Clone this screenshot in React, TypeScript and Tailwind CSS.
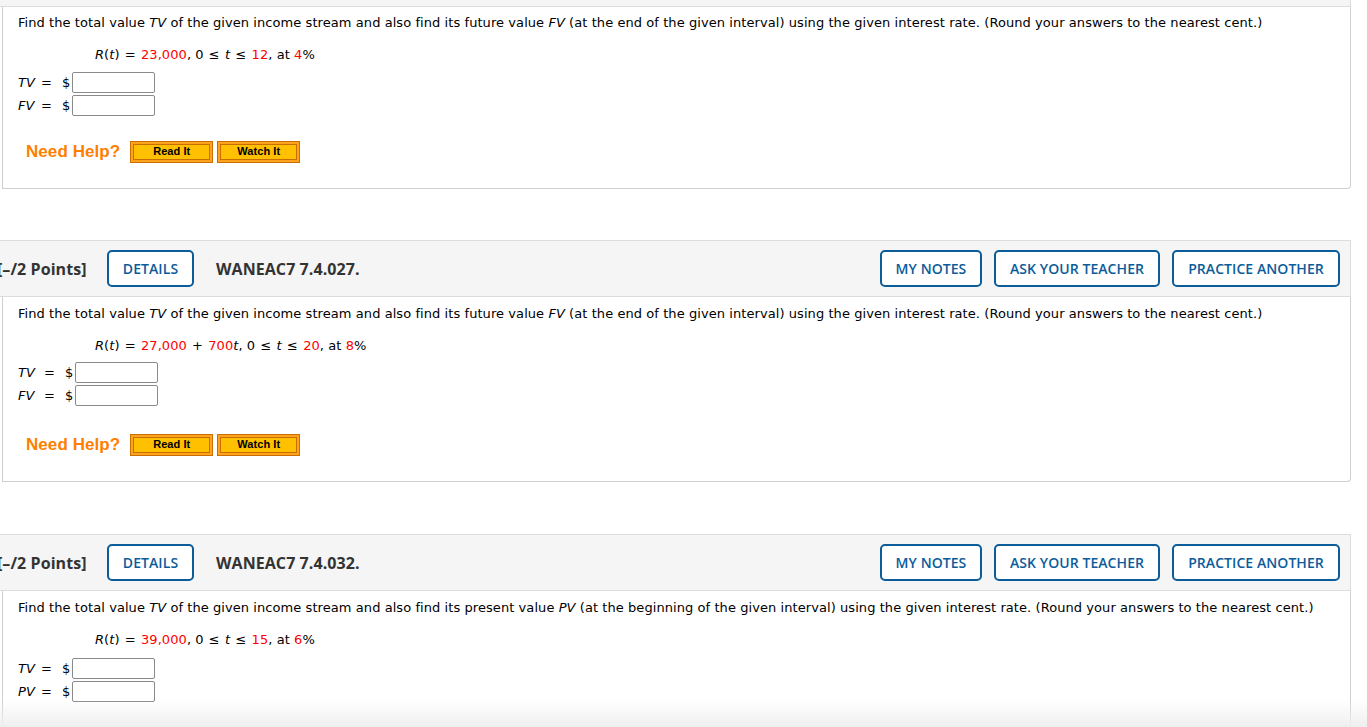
import React from "react";

const verdana = { fontFamily: '"DejaVu Sans", Verdana, sans-serif' };

function Header({ code }: { code: string }) {
  return (
    <div className="h-[57px] bg-[#f5f5f5] border-t border-b border-r border-[#dcdcdc] flex items-center pr-[10px]" style={{ fontFamily: '"Open Sans", "Noto Sans", sans-serif' }}>
      <span className="ml-[-3px] text-[16px] font-bold text-[#333333] w-[89px] whitespace-nowrap">[–/2 Points]</span>
      <button className="ml-[21px] h-[37px] w-[87px] rounded-[5px] border-2 border-[#0b5c99] text-[14px] font-semibold text-[#0b5c99] bg-white">DETAILS</button>
      <span className="ml-[22px] text-[16px] font-bold text-[#333333]">{code}</span>
      <div className="ml-auto flex gap-[12px]">
        <button className="h-[37px] w-[102px] rounded-[5px] border-2 border-[#0b5c99] text-[14px] font-semibold text-[#0b5c99] bg-white">MY NOTES</button>
        <button className="h-[37px] w-[166px] rounded-[5px] border-2 border-[#0b5c99] text-[14px] font-semibold text-[#0b5c99] bg-white">ASK YOUR TEACHER</button>
        <button className="h-[37px] w-[168px] rounded-[5px] border-2 border-[#0b5c99] text-[14px] font-semibold text-[#0b5c99] bg-white">PRACTICE ANOTHER</button>
      </div>
    </div>
  );
}

function HelpBtn({ label }: { label: string }) {
  return (
    <div className="h-[22px] w-[83px] border border-[#c86f00] bg-[#ffa21e] p-[2px]">
      <div className="h-full w-full border border-[#c86f00] bg-[#ffc000] flex items-center justify-center text-[11px] font-bold text-black leading-none" style={{ fontFamily: '"Liberation Sans", Arial, sans-serif' }}>
        {label}
      </div>
    </div>
  );
}

function NeedHelp() {
  return (
    <div className="flex items-center ml-[8px]">
      <span className="text-[17px] font-bold text-[#ff8000] mr-[10px]" style={{ fontFamily: '"Liberation Sans", Arial, sans-serif' }}>Need Help?</span>
      <HelpBtn label="Read It" />
      <div className="w-[4px]" />
      <HelpBtn label="Watch It" />
    </div>
  );
}

function Red({ children }: { children: React.ReactNode }) {
  return <span className="text-[#ff0000]">{children}</span>;
}

function Op({ children }: { children: React.ReactNode }) {
  return <span className="mx-[1px]">{children}</span>;
}

function AnswerRow({ label }: { label: string }) {
  return (
    <div className="flex items-center h-[23px]">
      <span className="italic w-[23px]">{label}</span>
      <span className="w-[21px]">=</span>
      <span className="w-[10px]">$</span>
      <div className="w-[83px] h-[21px] border border-[#8a8a8a] rounded-[2px] bg-white" />
    </div>
  );
}

const desc1 = "Find the total value ";

export default function App() {
  return (
    <div className="w-[1367px] h-[727px] overflow-hidden relative bg-white text-[13px] text-black tracking-[0.07px]" style={verdana}>
      {/* top partial header */}
      <div className="h-[7px] w-[1351px] bg-[#f5f5f5] border-b border-r border-[#dcdcdc]" />
      {/* card 1 body */}
      <div className="ml-[2px] w-[1349px] h-[182px] border-l border-r border-b border-[#cfcfcf] rounded-br-[4px] pl-[15px] pt-[7px]">
        <p className="leading-[18px]">
          {desc1}<i>TV</i> of the given income stream and also find its future value <i>FV</i> (at the end of the given interval) using the given interest rate. (Round your answers to the nearest cent.)
        </p>
        <p className="ml-[77px] mt-[14px] leading-[18px]">
          <i>R</i>(<i>t</i>) <Op>=</Op> <Red>23,000</Red>, 0 <Op>≤</Op> <i>t</i> <Op>≤</Op> <Red>12</Red>, at <Red>4</Red>%
        </p>
        <div className="mt-[7px]">
          <AnswerRow label="TV" />
          <AnswerRow label="FV" />
        </div>
        <div className="mt-[22px]">
          <NeedHelp />
        </div>
      </div>

      <div className="h-[51px]" />

      {/* card 2 */}
      <div className="w-[1351px]">
        <Header code="WANEAC7 7.4.027." />
        <div className="ml-[2px] w-[1349px] h-[185px] border-l border-r border-b border-[#cfcfcf] rounded-br-[4px] pl-[15px] pt-[8px]">
          <p className="leading-[18px]">
            {desc1}<i>TV</i> of the given income stream and also find its future value <i>FV</i> (at the end of the given interval) using the given interest rate. (Round your answers to the nearest cent.)
          </p>
          <p className="ml-[77px] mt-[14px] leading-[18px]">
            <i>R</i>(<i>t</i>) <Op>=</Op> <Red>27,000</Red> <Op>+</Op> <Red>700</Red><i>t</i>, 0 <Op>≤</Op> <i>t</i> <Op>≤</Op> <Red>20</Red>, at <Red>8</Red>%
          </p>
          <div className="mt-[6px] flex">
            <div>
              <div className="flex items-center h-[23px]">
                <span className="italic w-[26px]">TV</span>
                <span className="w-[21px]">=</span>
                <span className="w-[10px]">$</span>
                <div className="w-[83px] h-[21px] border border-[#8a8a8a] rounded-[2px] bg-white" />
              </div>
              <div className="flex items-center h-[23px]">
                <span className="italic w-[26px]">FV</span>
                <span className="w-[21px]">=</span>
                <span className="w-[10px]">$</span>
                <div className="w-[83px] h-[21px] border border-[#8a8a8a] rounded-[2px] bg-white" />
              </div>
            </div>
          </div>
          <div className="mt-[25px]">
            <NeedHelp />
          </div>
        </div>
      </div>

      <div className="h-[52px]" />

      {/* card 3 */}
      <div className="w-[1351px]">
        <Header code="WANEAC7 7.4.032." />
        <div className="ml-[2px] w-[1349px] h-[200px] border-l border-r border-[#cfcfcf] pl-[15px] pt-[8px]">
          <p className="leading-[18px]">
            {desc1}<i>TV</i> of the given income stream and also find its present value <i>PV</i> (at the beginning of the given interval) using the given interest rate. (Round your answers to the nearest cent.)
          </p>
          <p className="ml-[77px] mt-[14px] leading-[18px]">
            <i>R</i>(<i>t</i>) <Op>=</Op> <Red>39,000</Red>, 0 <Op>≤</Op> <i>t</i> <Op>≤</Op> <Red>15</Red>, at <Red>6</Red>%
          </p>
          <div className="mt-[8px]">
            <AnswerRow label="TV" />
            <AnswerRow label="PV" />
          </div>
        </div>
      </div>

      {/* bottom fade */}
      <div className="absolute left-0 right-0 bottom-0 h-[27px] bg-gradient-to-b from-[#ffffff00] to-[#efefef] pointer-events-none" />
    </div>
  );
}
